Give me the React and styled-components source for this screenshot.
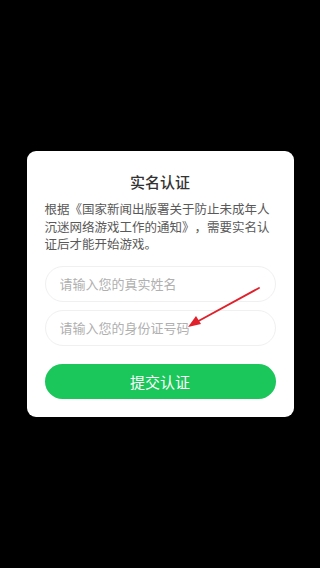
import React from "react";
import styled, { createGlobalStyle } from "styled-components";

const Global = createGlobalStyle`
  html, body { margin: 0; padding: 0; background: #000; }
  body { font-family: "Noto Sans CJK SC", "Noto Sans", sans-serif; }
  * { box-sizing: border-box; }
`;

const Screen = styled.div`
  width: 320px;
  height: 568px;
  background: #000;
  display: flex;
  align-items: center;
  justify-content: center;
`;

const Card = styled.div`
  position: relative;
  width: 267px;
  background: #fff;
  border-radius: 9px;
  padding: 21px 18px 18px;
  display: flex;
  flex-direction: column;
`;

const Title = styled.div`
  font-size: 15px;
  line-height: 20px;
  font-weight: 500;
  color: #333;
  text-align: center;
`;

const Body = styled.div`
  margin-top: 8px;
  font-size: 12.5px;
  line-height: 17.6px;
  color: #595959;
  text-spacing-trim: space-all;
  font-feature-settings: "fwid" 1;
`;

const Fields = styled.div`
  margin-top: 13px;
  display: flex;
  flex-direction: column;
  gap: 8px;
`;

const Input = styled.input`
  width: 100%;
  height: 36px;
  border: 1px solid #f0f0f0;
  border-radius: 18px;
  padding: 0 14px;
  font-family: inherit;
  font-size: 13px;
  color: #333;
  outline: none;
  background: #fff;
  &::placeholder { color: #b0b0b0; }
`;

const Submit = styled.button`
  margin-top: 18px;
  height: 35px;
  border: none;
  border-radius: 18px;
  background: #1bc65a;
  color: #fff;
  font-family: inherit;
  font-size: 15px;
  cursor: pointer;
`;

const Arrow = styled.svg`
  position: absolute;
  left: 155px;
  top: 130px;
  width: 90px;
  height: 50px;
  overflow: visible;
  pointer-events: none;
`;

export default function App() {
  return (
    <>
      <Global />
      <Screen>
        <Card>
          <Title>实名认证</Title>
          <Body>
            根据《国家新闻出版署关于防止未成年人沉迷网络游戏工作的通知》，需要实名认证后才能开始游戏。
          </Body>
          <Fields>
            <Input placeholder="请输入您的真实姓名" />
            <Input placeholder="请输入您的身份证号码" />
          </Fields>
          <Submit>提交认证</Submit>
          <Arrow viewBox="0 0 90 50">
            <line x1="77" y1="7" x2="11" y2="43" stroke="#e0202a" strokeWidth="1.8" strokeLinecap="round" />
            <path d="M6 46 L19 43 L14 35 Z" fill="#e0202a" />
          </Arrow>
        </Card>
      </Screen>
    </>
  );
}
